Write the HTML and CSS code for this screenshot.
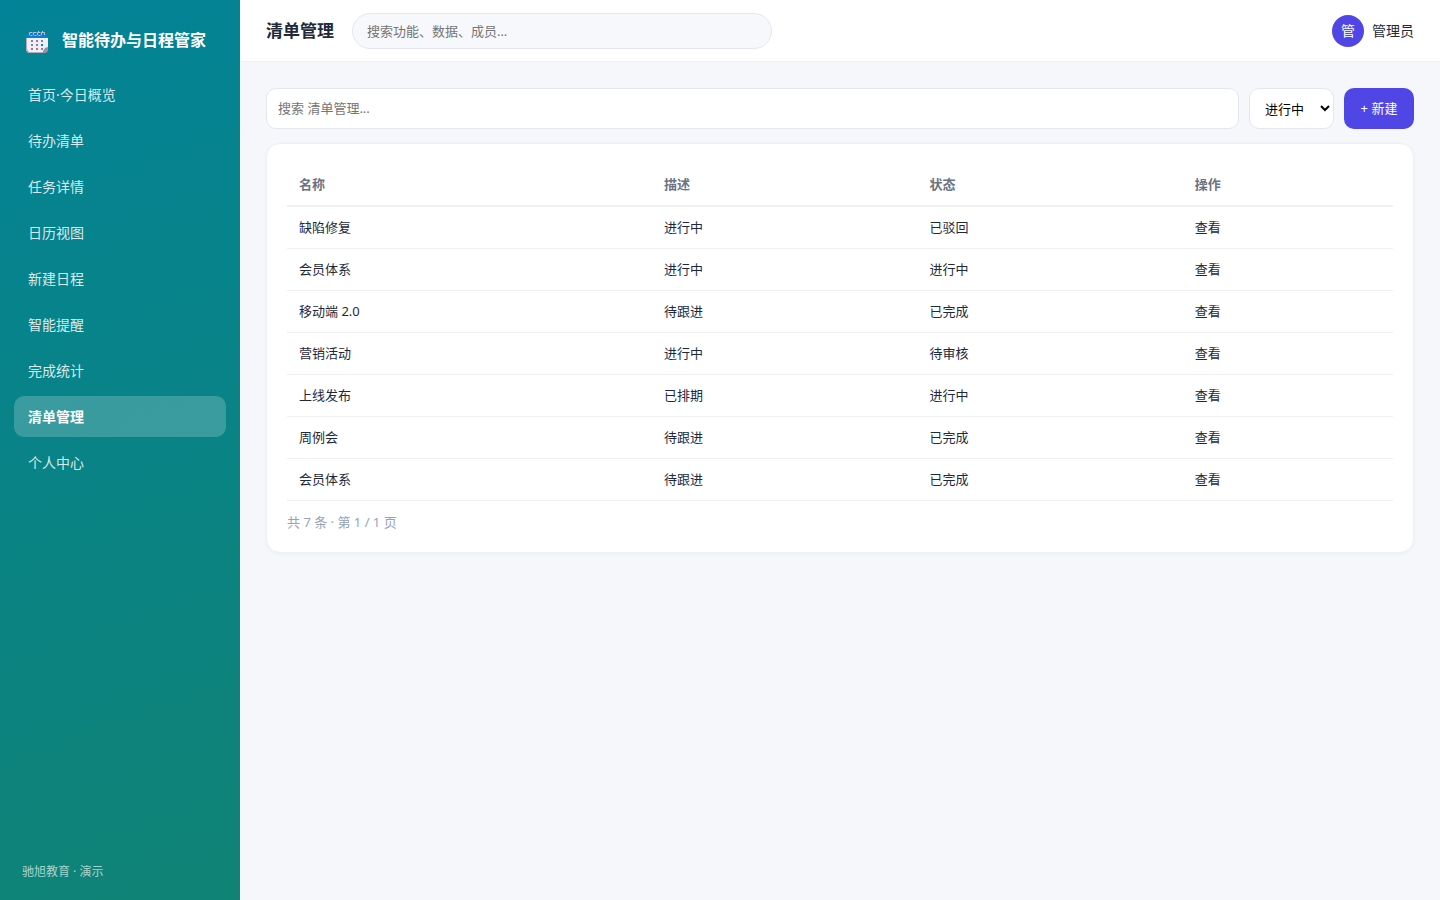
FILE: index.html
```html
<!DOCTYPE html>
<html lang="zh-CN">
<head>
    <meta charset="UTF-8">
    <meta name="viewport" content="width=device-width, initial-scale=1.0">
    <title>清单管理</title>
    <link rel="stylesheet" href="styles.css">
</head>
<body>
    <div class="app">
        <!-- Sidebar -->
        <aside class="sidebar">
            <div class="brand">
                <svg class="brand-icon" viewBox="0 0 26 26" aria-hidden="true">
                    <path d="M2 11h22v10l-4 4H4l-2-2z" fill="#f3eef8"/>
                    <path d="M2 11h1v11l2 3h14v1H4l-1-1-1-2z" fill="#b9a9bd"/>
                    <path d="M24 20v4l-2 2h-3v-2l2-3z" fill="#998ea3"/>
                    <path d="M4 7h18l2 4H2z" fill="#0c7fd0"/>
                    <path d="M5.500 8V5.500h3M6.500 8.500h2M9.500 8V5.500h3M10.500 8.500h2M13.500 8V5.500h3M14.500 8.500h2M17.500 8V5.500h3V8" fill="none" stroke="#c5bdce" stroke-width="1"/>
                    <path d="M14 4h1v1h-1zM18 4h1v1h-1z" fill="#c5bdce"/>
                    <g fill="#8c8296">
                        <rect x="7" y="13" width="2" height="2"/>
                        <rect x="12" y="13" width="2" height="2"/>
                        <rect x="17" y="13" width="2" height="2"/>
                        <rect x="7" y="17" width="2" height="2"/>
                        <rect x="12" y="17" width="2" height="2"/>
                        <rect x="7" y="21" width="2" height="2"/>
                        <rect x="12" y="21" width="2" height="2"/>
                        <rect x="17" y="21" width="2" height="2"/>
                    </g>
                    <rect x="17" y="17" width="2" height="2" fill="#0c7fd0"/>
                </svg>
                <span>智能待办与日程管家</span>
            </div>
            <nav class="nav">
                <a href="#">首页·今日概览</a>
                <a href="#">待办清单</a>
                <a href="#">任务详情</a>
                <a href="#">日历视图</a>
                <a href="#">新建日程</a>
                <a href="#">智能提醒</a>
                <a href="#">完成统计</a>
                <a href="#" class="active" aria-current="page">清单管理</a>
                <a href="#">个人中心</a>
            </nav>
            <div class="sidebar-footer">驰旭教育 · 演示</div>
        </aside>

        <div class="main">
            <!-- Top bar -->
            <header class="topbar">
                <h1>清单管理</h1>
                <input type="search" class="global-search" placeholder="搜索功能、数据、成员…" aria-label="全局搜索">
                <div class="user">
                    <span class="avatar">管</span>
                    <span>管理员</span>
                </div>
            </header>

            <main class="content">
                <form class="toolbar">
                    <input type="text" class="field" placeholder="搜索 清单管理..." aria-label="搜索 清单管理">
                    <select class="status" aria-label="状态">
                        <option>进行中</option>
                        <option>待跟进</option>
                        <option>已完成</option>
                    </select>
                    <button type="button" class="btn">+ 新建</button>
                </form>

                <section class="card">
                    <table>
                        <colgroup>
                            <col class="col-name">
                            <col class="col-text">
                            <col class="col-text">
                            <col>
                        </colgroup>
                        <thead>
                            <tr><th>名称</th><th>描述</th><th>状态</th><th>操作</th></tr>
                        </thead>
                        <tbody>
                            <tr><td>缺陷修复</td><td>进行中</td><td>已驳回</td><td><a href="#">查看</a></td></tr>
                            <tr><td>会员体系</td><td>进行中</td><td>进行中</td><td><a href="#">查看</a></td></tr>
                            <tr><td>移动端 2.0</td><td>待跟进</td><td>已完成</td><td><a href="#">查看</a></td></tr>
                            <tr><td>营销活动</td><td>进行中</td><td>待审核</td><td><a href="#">查看</a></td></tr>
                            <tr><td>上线发布</td><td>已排期</td><td>进行中</td><td><a href="#">查看</a></td></tr>
                            <tr><td>周例会</td><td>待跟进</td><td>已完成</td><td><a href="#">查看</a></td></tr>
                            <tr><td>会员体系</td><td>待跟进</td><td>已完成</td><td><a href="#">查看</a></td></tr>
                        </tbody>
                    </table>
                    <div class="pager">共 7 条 · 第 1 / 1 页</div>
                </section>
            </main>
        </div>
    </div>
</body>
</html>
```

FILE: styles.css
```css
* {
    margin: 0;
    padding: 0;
    box-sizing: border-box;
}

body {
    font-family: "Noto Sans", "Noto Sans CJK SC", sans-serif;
    font-size: 14px;
    line-height: 20px;
    color: #1e293b;
    background: #f5f7fb;
}

a {
    color: inherit;
    text-decoration: none;
}

input,
select,
button {
    font-family: inherit;
    font-size: 13px;
    line-height: 19px;
}

.app {
    display: flex;
    min-height: 100vh;
}

/* Sidebar */
.sidebar {
    display: flex;
    flex-direction: column;
    flex: 0 0 240px;
    padding: 22px 14px 18px;
    background: linear-gradient(160deg, #038397, #108375);
    color: #fff;
}

.brand {
    display: flex;
    align-items: center;
    gap: 12px;
    height: 36px;
    margin-bottom: 16px;
    padding: 0 10px;
    font-size: 16px;
    font-weight: 600;
}

.brand-icon {
    flex: none;
    width: 26px;
    height: 26px;
}

.nav {
    display: flex;
    flex-direction: column;
    gap: 5px;
}

.nav a {
    padding: 10px 14px;
    line-height: 21px;
    border-radius: 10px;
    color: rgba(255, 255, 255, 0.85);
}

.nav a:hover {
    background: rgba(255, 255, 255, 0.1);
}

.nav a.active {
    background: rgba(255, 255, 255, 0.2);
    color: #fff;
    font-weight: 600;
}

.sidebar-footer {
    margin-top: auto;
    padding: 0 8px;
    font-size: 12px;
    color: rgba(255, 255, 255, 0.65);
}

/* Top bar */
.main {
    flex: 1;
    min-width: 0;
}

.topbar {
    display: flex;
    align-items: center;
    gap: 18px;
    height: 62px;
    padding: 0 26px;
    background: #fff;
    border-bottom: 1px solid #eef0f5;
}

.topbar h1 {
    font-size: 17px;
    font-weight: 700;
}

.global-search {
    flex: 0 1 420px;
    min-width: 0;
    height: 36px;
    padding: 0 14px;
    border: 1px solid #e5e7f0;
    border-radius: 18px;
    background: #f7f8fc;
    outline: none;
}

.user {
    display: flex;
    align-items: center;
    gap: 8px;
    margin-left: auto;
}

.avatar {
    display: flex;
    align-items: center;
    justify-content: center;
    width: 32px;
    height: 32px;
    border-radius: 50%;
    background: #4f46e5;
    color: #fff;
}

/* Content */
.content {
    padding: 26px;
}

.toolbar {
    display: flex;
    gap: 10px;
    height: 41px;
    margin-bottom: 14px;
}

.field,
.status {
    padding: 0 11px;
    border: 1px solid #e5e7f0;
    border-radius: 10px;
    background: #fff;
    outline: none;
}

.field {
    flex: 1;
    min-width: 0;
}

.status {
    width: 85px;
    padding-right: 0;
    color: #000;
}

.btn {
    min-width: 70px;
    padding: 0 16px;
    border: none;
    border-radius: 10px;
    background: #4f46e5;
    color: #fff;
    cursor: pointer;
}

.btn:hover {
    background: #4338ca;
}

.card {
    padding: 20px;
    border: 1px solid #eef0f5;
    border-radius: 14px;
    background: #fff;
    box-shadow: 0 1px 4px rgba(30, 41, 59, 0.04);
}

table {
    width: 100%;
    table-layout: fixed;
    border-collapse: collapse;
    font-size: 13px;
}

.col-name {
    width: 33%;
}

.col-text {
    width: 24%;
}

th,
td {
    padding: 11px 12px;
    line-height: 19px;
    text-align: left;
    border-bottom: 1px solid #eef0f3;
}

th {
    color: #6b7280;
    font-weight: 600;
    border-bottom: 2px solid #eef0f5;
}

.pager {
    padding-top: 12px;
    font-size: 13px;
    line-height: 19px;
    color: #94a3b8;
}
```
